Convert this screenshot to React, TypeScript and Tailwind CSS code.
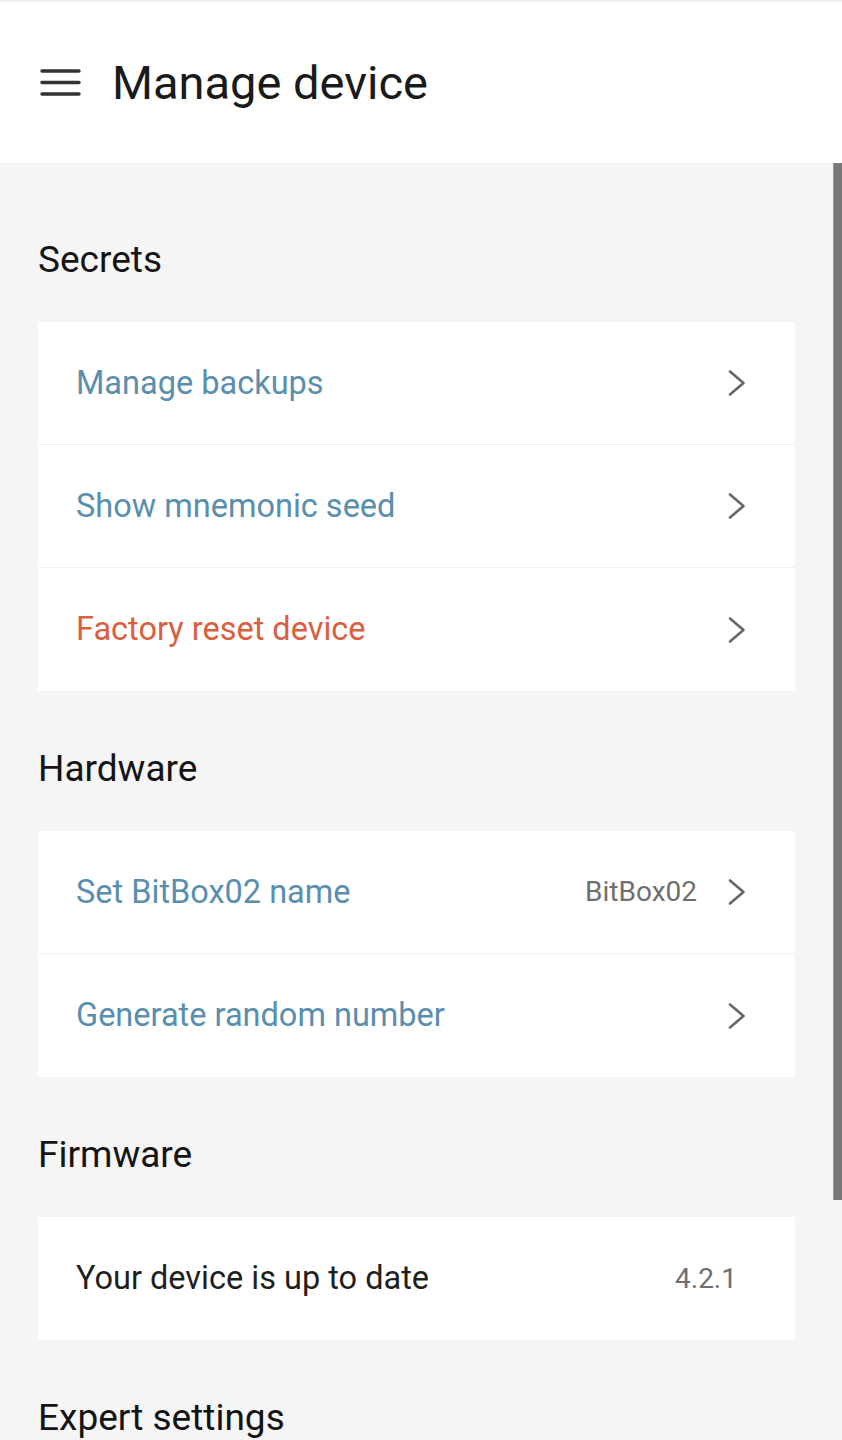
import React from 'react';

type Row = {
    label: string;
    tone?: 'link' | 'danger' | 'plain';
    value?: string;
    chevron?: boolean;
};

const sections: { title: string; rows: Row[] }[] = [
    {
        title: 'Secrets',
        rows: [
            { label: 'Manage backups', tone: 'link', chevron: true },
            { label: 'Show mnemonic seed', tone: 'link', chevron: true },
            { label: 'Factory reset device', tone: 'danger', chevron: true },
        ],
    },
    {
        title: 'Hardware',
        rows: [
            { label: 'Set BitBox02 name', tone: 'link', value: 'BitBox02', chevron: true },
            { label: 'Generate random number', tone: 'link', chevron: true },
        ],
    },
    {
        title: 'Firmware',
        rows: [{ label: 'Your device is up to date', tone: 'plain', value: '4.2.1' }],
    },
];

const Chevron: React.FC = () => (
    <svg width="20" height="28" viewBox="0 0 20 28" fill="none" className="shrink-0">
        <polyline points="3,2.5 16.5,14 3,25.5" stroke="#666" strokeWidth="2.6" strokeLinecap="round" strokeLinejoin="round" />
    </svg>
);

const MenuIcon: React.FC = () => (
    <svg width="42" height="30" viewBox="0 0 42 30" fill="none">
        <line x1="2" y1="3" x2="39" y2="3" stroke="#333" strokeWidth="3.4" strokeLinecap="round" />
        <line x1="2" y1="14.5" x2="39" y2="14.5" stroke="#333" strokeWidth="3.4" strokeLinecap="round" />
        <line x1="2" y1="26" x2="39" y2="26" stroke="#333" strokeWidth="3.4" strokeLinecap="round" />
    </svg>
);

const toneClass = {
    link: 'text-[#5a8eaf]',
    danger: 'text-[#d8603f]',
    plain: 'text-[#1f1f1f]',
};

const SettingRow: React.FC<{ row: Row; last: boolean }> = ({ row, last }) => (
    <div className={`h-[123px] flex items-center pl-[38px] pr-[48px] ${last ? '' : 'border-b border-[#f0f0f0]'}`}>
        <span className={`flex-1 text-[32.5px] leading-none ${toneClass[row.tone ?? 'plain']}`}>{row.label}</span>
        {row.value && (
            <span className={`text-[28px] leading-none text-[#6f6f6f] ${row.chevron ? 'mr-[30px]' : 'mr-[10px]'}`}>{row.value}</span>
        )}
        {row.chevron && <Chevron />}
    </div>
);

const Heading: React.FC<{ children: React.ReactNode }> = ({ children }) => (
    <h2 className="pt-[59px] pb-[43px] text-[37px] leading-[38px] text-[#141414] font-normal">{children}</h2>
);

export default function App() {
    return (
        <div className="w-[842px] h-[1440px] overflow-hidden bg-[#f5f5f5] font-['Roboto','Liberation_Sans',sans-serif]">
            <header className="h-[163px] bg-white border-t-2 border-[#f1f1f1] flex items-center pl-[40px]">
                <MenuIcon />
                <h1 className="ml-[30px] text-[47px] leading-none text-[#1a1a1a] font-normal">Manage device</h1>
            </header>
            <div className="flex">
                <main className="flex-1 px-[38px] pt-[19px]">
                    {sections.map((s) => (
                        <section key={s.title}>
                            <Heading>{s.title}</Heading>
                            <div className="bg-white">
                                {s.rows.map((r, i) => (
                                    <SettingRow key={r.label} row={r} last={i === s.rows.length - 1} />
                                ))}
                            </div>
                        </section>
                    ))}
                    <Heading>Expert settings</Heading>
                </main>
                <aside className="w-[9px] shrink-0">
                    <div className="h-[1037px] bg-[#787878] border-l border-[#9a9a9a]"></div>
                </aside>
            </div>
        </div>
    );
}
